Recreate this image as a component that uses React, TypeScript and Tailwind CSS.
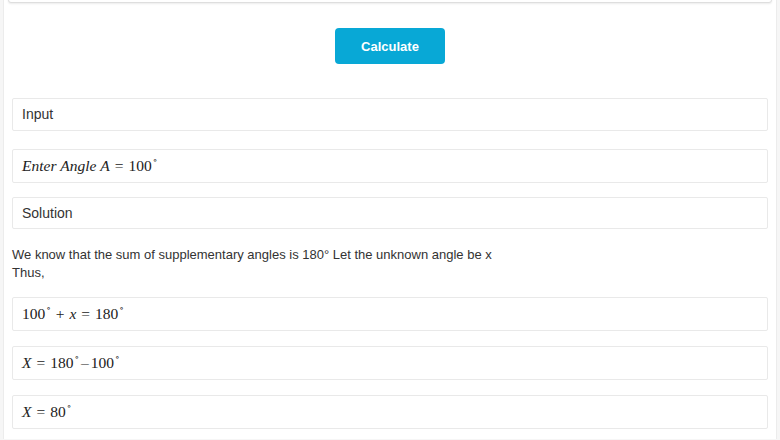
const sans = { fontFamily: '"Liberation Sans", Arial, sans-serif' };
const serif = { fontFamily: '"Liberation Serif", "DejaVu Serif", serif' };

function Deg() {
  return <span className="text-[9px] relative top-[-5px] ml-px">∘</span>;
}

function MathBox({ className, children }: { className: string; children: React.ReactNode }) {
  return (
    <div
      className={`flex items-center border border-[#e9e9e9] rounded-[2px] px-[9px] text-[15.5px] text-[#222] ${className}`}
      style={serif}
    >
      {children}
    </div>
  );
}

function LabelBox({ className, children }: { className: string; children: React.ReactNode }) {
  return (
    <div className={`flex items-center border border-[#e9e9e9] rounded-[2px] px-[9px] text-[14px] text-[#333] ${className}`}>
      {children}
    </div>
  );
}

export default function App() {
  return (
    <div className="min-h-[440px] bg-[#f6f6f6] px-[3px] overflow-hidden" style={sans}>
      <div className="min-h-[440px] bg-white border-x border-[#ececec] px-[8px] pb-[10px]">
        {/* previous card, cut off at top */}
        <div className="-mt-[17px] -mx-[4px] h-[20px] bg-white border border-[#dedede] rounded-[3px] shadow-[0_1px_2px_rgba(0,0,0,0.08)]" />

        <div className="flex justify-center mt-[25px]">
          <button className="w-[110px] h-[36px] rounded-[4px] bg-[#08a8d6] text-white text-[13px] font-bold pt-px">
            Calculate
          </button>
        </div>

        <LabelBox className="mt-[34px] h-[33px]">Input</LabelBox>

        <MathBox className="mt-[18px] h-[34px]">
          <i>Enter</i>&nbsp;<i>Angle</i>&nbsp;<i>A</i>
          <span className="mx-[5px]">=</span>100<Deg />
        </MathBox>

        <LabelBox className="mt-[14px] h-[32px]">Solution</LabelBox>

        <p className="mt-[17px] text-[13px] leading-[18px] text-[#333]">
          We know that the sum of supplementary angles is 180° Let the unknown angle be x
          <br />
          Thus,
        </p>

        <MathBox className="mt-[15px] h-[34px]">
          100<Deg />
          <span className="mx-[5px]">+</span>
          <i>x</i>
          <span className="mx-[5px]">=</span>180<Deg />
        </MathBox>

        <MathBox className="mt-[15px] h-[34px]">
          <i>X</i>
          <span className="mx-[5px]">=</span>180<Deg />
          <span className="mx-[2px]">–</span>100<Deg />
        </MathBox>

        <MathBox className="mt-[15px] h-[34px]">
          <i>X</i>
          <span className="mx-[5px]">=</span>80<Deg />
        </MathBox>
      </div>
    </div>
  );
}
